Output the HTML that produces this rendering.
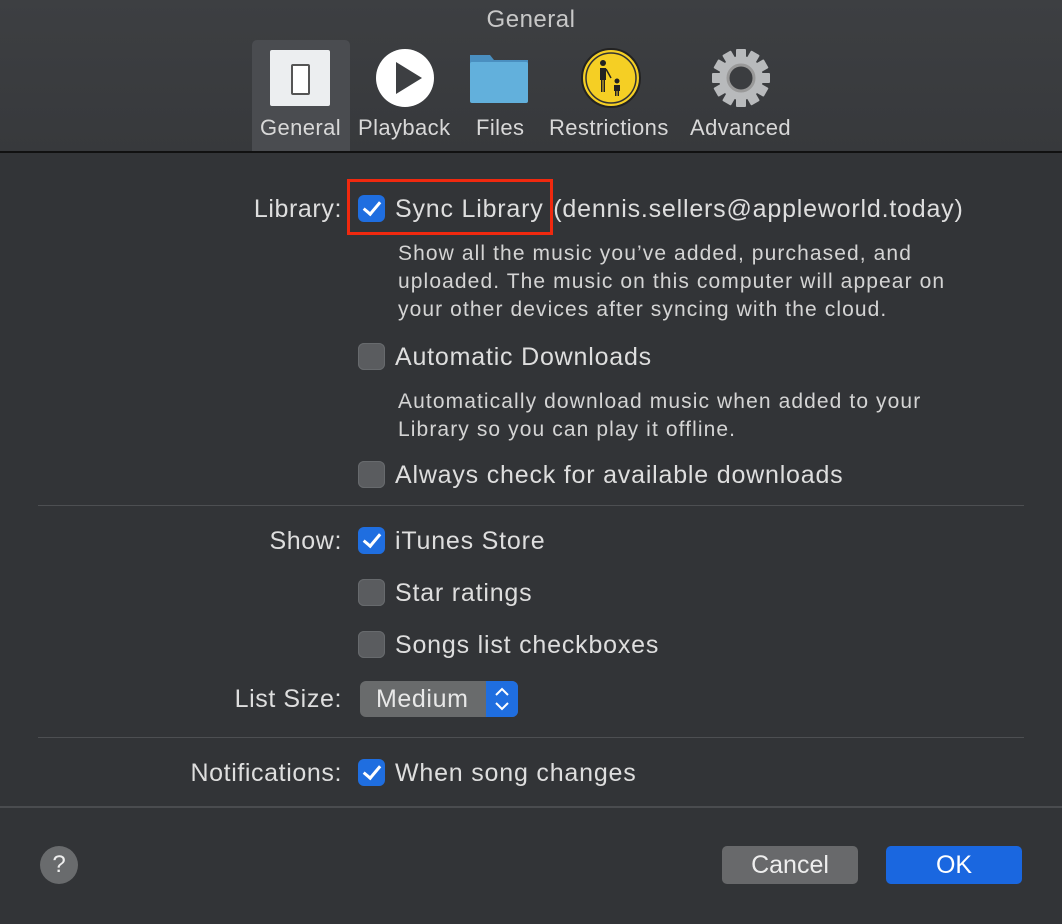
<!DOCTYPE html>
<html><head><meta charset="utf-8"><style>
body{margin:0;width:1062px;height:924px;background:#323437;font-family:"Liberation Sans",sans-serif;color:#dedede;position:relative;overflow:hidden}
.a{position:absolute;white-space:nowrap}
.tb{position:absolute;left:0;top:0;width:1062px;height:151px;background:linear-gradient(#3d3f42,#37393c);border-bottom:2px solid #111}
.lab{font-size:25px;line-height:28px;text-align:right;right:720px;letter-spacing:0.6px}
.t{font-size:25px;line-height:28px;left:395px;letter-spacing:0.8px}
.d{font-size:21px;line-height:28px;left:398px;color:#d4d4d4;letter-spacing:1.1px}
.cb{position:absolute;left:358px;width:27px;height:27px;border-radius:6px;background:#5a5c5f;box-shadow:inset 0 0 0 1px #676a6d}
.cb.on{background:#1f6ee0;box-shadow:none}
.cb.on:after{content:"";position:absolute;left:9px;top:3px;width:7px;height:14px;border:solid #fff;border-width:0 3px 3px 0;transform:rotate(40deg)}
.sep{position:absolute;left:38px;width:986px;height:1px;background:#4d4f52}
.tl{font-size:22px;color:#d8d8d8;top:115px;letter-spacing:0.4px}
</style></head><body>
<div class="tb"></div>
<div class="a" style="left:0;width:1062px;text-align:center;top:6px;font-size:24px;color:#c8c8c8;letter-spacing:0.5px">General</div>
<div class="a" style="left:252px;top:40px;width:98px;height:111px;background:#4a4c50;border-radius:5px 5px 0 0"></div>
<div class="a" style="left:270px;top:50px;width:60px;height:56px;background:#eceef0;border-radius:2px"></div>
<div class="a" style="left:291px;top:64px;width:15px;height:27px;background:#fff;border:2px solid #555;border-radius:2px"></div>
<svg class="a" style="left:374px;top:47px" width="62" height="62"><circle cx="31" cy="31" r="29" fill="#fff"/><path d="M22 15 L48 31 L22 47Z" fill="#3d3f42"/></svg>
<svg class="a" style="left:466px;top:52px" width="66" height="52"><path d="M4 3h20l4 5h34v4H4z" fill="#4a8fc0"/><rect x="4" y="10" width="58" height="41" rx="2" fill="#62b0dc"/></svg>
<svg class="a" style="left:580px;top:47px" width="62" height="62"><circle cx="31" cy="31" r="29" fill="#f5cf24" stroke="#222" stroke-width="2"/><circle cx="31" cy="31" r="25" fill="none" stroke="#333" stroke-width="1.5"/><circle cx="23" cy="16" r="3" fill="#222"/><path d="M20 21h6v12h-1v12h-1.5v-12h-1v12H21v-12h-1z" fill="#222"/><path d="M26 22l5 9" stroke="#222" stroke-width="1.5"/><circle cx="37" cy="34" r="2.5" fill="#222"/><path d="M34 38h6v6h-1v5h-1.5v-5h-1v5H35v-5h-1z" fill="#222"/></svg>
<svg class="a" style="left:710px;top:47px" width="62" height="62" viewBox="-31 -31 62 62"><g fill="#b8babc"><circle r="22"/><g id="t"><rect x="-5" y="-29" width="10" height="12" rx="1"/></g><use href="#t" transform="rotate(30)"/><use href="#t" transform="rotate(60)"/><use href="#t" transform="rotate(90)"/><use href="#t" transform="rotate(120)"/><use href="#t" transform="rotate(150)"/><use href="#t" transform="rotate(180)"/><use href="#t" transform="rotate(210)"/><use href="#t" transform="rotate(240)"/><use href="#t" transform="rotate(270)"/><use href="#t" transform="rotate(300)"/><use href="#t" transform="rotate(330)"/></g><circle r="13" fill="#3b3d40"/><circle r="13" fill="none" stroke="#999" stroke-width="3"/></svg>
<div class="a tl" style="left:260px">General</div>
<div class="a tl" style="left:358px">Playback</div>
<div class="a tl" style="left:476px">Files</div>
<div class="a tl" style="left:549px">Restrictions</div>
<div class="a tl" style="left:690px">Advanced</div>

<div class="a lab" style="top:195px">Library:</div>
<div class="a" style="left:347px;top:179px;width:206px;height:56px;border:3px solid #f0290f;box-sizing:border-box"></div>
<div class="cb on" style="top:195px"></div>
<div class="a t" style="top:195px">Sync Library <span style="margin-left:2px">(dennis.sellers@appleworld.today)</span></div>
<div class="a d" style="top:240px">Show all the music you’ve added, purchased, and</div>
<div class="a d" style="top:268px">uploaded. The music on this computer will appear on</div>
<div class="a d" style="top:296px">your other devices after syncing with the cloud.</div>
<div class="cb" style="top:343px"></div>
<div class="a t" style="top:343px">Automatic Downloads</div>
<div class="a d" style="top:388px">Automatically download music when added to your</div>
<div class="a d" style="top:416px">Library so you can play it offline.</div>
<div class="cb" style="top:461px"></div>
<div class="a t" style="top:461px">Always check for available downloads</div>
<div class="sep" style="top:505px"></div>
<div class="a lab" style="top:527px">Show:</div>
<div class="cb on" style="top:527px"></div>
<div class="a t" style="top:527px">iTunes Store</div>
<div class="cb" style="top:579px"></div>
<div class="a t" style="top:579px">Star ratings</div>
<div class="cb" style="top:631px"></div>
<div class="a t" style="top:631px">Songs list checkboxes</div>
<div class="a lab" style="top:685px">List Size:</div>
<div class="a" style="left:360px;top:681px;width:158px;height:36px;border-radius:6px;background:#696b6c;overflow:hidden">
<div class="a" style="left:16px;top:4px;font-size:25px;line-height:28px;color:#e8e8e8;letter-spacing:0.6px">Medium</div>
<div class="a" style="right:0;top:0;width:32px;height:36px;background:#1f6ee0"></div>
<svg class="a" style="right:0;top:0" width="32" height="36"><path d="M10 14l6-6 6 6M10 22l6 6 6-6" stroke="#fff" stroke-width="2" fill="none"/></svg>
</div>
<div class="sep" style="top:737px"></div>
<div class="a lab" style="top:759px">Notifications:</div>
<div class="cb on" style="top:759px"></div>
<div class="a t" style="top:759px">When song changes</div>
<div class="a" style="left:0;top:806px;width:1062px;height:2px;background:#4a4c4f"></div>
<div class="a" style="left:40px;top:846px;width:38px;height:38px;border-radius:50%;background:#696b6d;color:#eee;font-size:24px;text-align:center;line-height:38px">?</div>
<div class="a" style="left:722px;top:846px;width:136px;height:38px;border-radius:5px;background:#68696b;color:#eee;font-size:25px;text-align:center;line-height:38px">Cancel</div>
<div class="a" style="left:886px;top:846px;width:136px;height:38px;border-radius:5px;background:#1a67e0;color:#fff;font-size:25px;text-align:center;line-height:38px">OK</div>
</body></html>
